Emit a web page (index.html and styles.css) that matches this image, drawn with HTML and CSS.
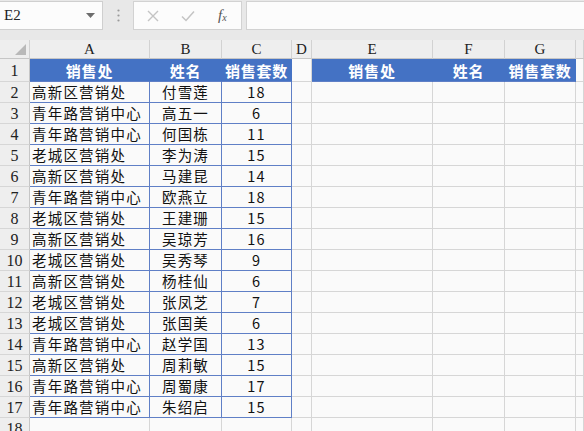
FILE: index.html
```html
<!DOCTYPE html>
<html lang="zh-CN">
<head>
<meta charset="utf-8">
<title>销售表</title>
<link rel="stylesheet" href="styles.css">
</head>
<body>
<div class="toolbar">
  <div class="namebox">
    <span class="namebox-text">E2</span>
    <svg class="dropdown" width="9" height="5" viewBox="0 0 9 5"><path d="M0 0 H9 L4.5 5 Z" fill="#6d6d6d"/></svg>
  </div>
  <div class="grip">
    <svg width="3" height="13" viewBox="0 0 3 13"><circle cx="1.5" cy="1.5" r="1.1" fill="#9a9a9a"/><circle cx="1.5" cy="6.5" r="1.1" fill="#9a9a9a"/><circle cx="1.5" cy="11.5" r="1.1" fill="#9a9a9a"/></svg>
  </div>
  <div class="fxbox">
    <svg class="ico" width="12" height="12" viewBox="0 0 12 12"><path d="M1 1 L11 11 M11 1 L1 11" stroke="#c4c4c4" stroke-width="1.4" fill="none"/></svg>
    <svg class="ico" width="14" height="12" viewBox="0 0 14 12"><path d="M1 6.5 L5 10.5 L13 1.5" stroke="#c4c4c4" stroke-width="1.5" fill="none"/></svg>
    <span class="fx">f<sub>x</sub></span>
  </div>
  <div class="formula"></div>
</div>

<div class="sheet">
  <div class="hd corner"><svg width="11" height="11" viewBox="0 0 11 11"><path d="M11 0 V11 H0 Z" fill="#b9b9b9"/></svg></div>
  <div class="hd">A</div><div class="hd">B</div><div class="hd">C</div><div class="hd">D</div><div class="hd">E</div><div class="hd">F</div><div class="hd">G</div><div class="hd"></div>

  <div class="rh r1">1</div>
  <div class="c th">销售处</div><div class="c th">姓名</div><div class="c th">销售套数</div><div class="c"></div>
  <div class="c th">销售处</div><div class="c th">姓名</div><div class="c th">销售套数</div><div class="c"></div>

  <div class="rh">2</div><div class="c t l">高新区营销处</div><div class="c t">付雪莲</div><div class="c t">18</div><div class="c"></div><div class="c"></div><div class="c"></div><div class="c"></div><div class="c"></div>
  <div class="rh">3</div><div class="c t l">青年路营销中心</div><div class="c t">高五一</div><div class="c t">6</div><div class="c"></div><div class="c"></div><div class="c"></div><div class="c"></div><div class="c"></div>
  <div class="rh">4</div><div class="c t l">青年路营销中心</div><div class="c t">何国栋</div><div class="c t">11</div><div class="c"></div><div class="c"></div><div class="c"></div><div class="c"></div><div class="c"></div>
  <div class="rh">5</div><div class="c t l">老城区营销处</div><div class="c t">李为涛</div><div class="c t">15</div><div class="c"></div><div class="c"></div><div class="c"></div><div class="c"></div><div class="c"></div>
  <div class="rh">6</div><div class="c t l">高新区营销处</div><div class="c t">马建昆</div><div class="c t">14</div><div class="c"></div><div class="c"></div><div class="c"></div><div class="c"></div><div class="c"></div>
  <div class="rh">7</div><div class="c t l">青年路营销中心</div><div class="c t">欧燕立</div><div class="c t">18</div><div class="c"></div><div class="c"></div><div class="c"></div><div class="c"></div><div class="c"></div>
  <div class="rh">8</div><div class="c t l">老城区营销处</div><div class="c t">王建珊</div><div class="c t">15</div><div class="c"></div><div class="c"></div><div class="c"></div><div class="c"></div><div class="c"></div>
  <div class="rh">9</div><div class="c t l">高新区营销处</div><div class="c t">吴琼芳</div><div class="c t">16</div><div class="c"></div><div class="c"></div><div class="c"></div><div class="c"></div><div class="c"></div>
  <div class="rh">10</div><div class="c t l">老城区营销处</div><div class="c t">吴秀琴</div><div class="c t">9</div><div class="c"></div><div class="c"></div><div class="c"></div><div class="c"></div><div class="c"></div>
  <div class="rh">11</div><div class="c t l">高新区营销处</div><div class="c t">杨桂仙</div><div class="c t">6</div><div class="c"></div><div class="c"></div><div class="c"></div><div class="c"></div><div class="c"></div>
  <div class="rh">12</div><div class="c t l">老城区营销处</div><div class="c t">张凤芝</div><div class="c t">7</div><div class="c"></div><div class="c"></div><div class="c"></div><div class="c"></div><div class="c"></div>
  <div class="rh">13</div><div class="c t l">老城区营销处</div><div class="c t">张国美</div><div class="c t">6</div><div class="c"></div><div class="c"></div><div class="c"></div><div class="c"></div><div class="c"></div>
  <div class="rh">14</div><div class="c t l">青年路营销中心</div><div class="c t">赵学国</div><div class="c t">13</div><div class="c"></div><div class="c"></div><div class="c"></div><div class="c"></div><div class="c"></div>
  <div class="rh">15</div><div class="c t l">高新区营销处</div><div class="c t">周莉敏</div><div class="c t">15</div><div class="c"></div><div class="c"></div><div class="c"></div><div class="c"></div><div class="c"></div>
  <div class="rh">16</div><div class="c t l">青年路营销中心</div><div class="c t">周蜀康</div><div class="c t">17</div><div class="c"></div><div class="c"></div><div class="c"></div><div class="c"></div><div class="c"></div>
  <div class="rh">17</div><div class="c t l">青年路营销中心</div><div class="c t">朱绍启</div><div class="c t">15</div><div class="c"></div><div class="c"></div><div class="c"></div><div class="c"></div><div class="c"></div>
  <div class="rh">18</div><div class="c"></div><div class="c"></div><div class="c"></div><div class="c"></div><div class="c"></div><div class="c"></div><div class="c"></div><div class="c"></div>
</div>
</body>
</html>
```

FILE: styles.css
```css
* { box-sizing: border-box; }
html, body { margin: 0; padding: 0; }
body {
  width: 584px;
  height: 431px;
  overflow: hidden;
  background: #e8e8e8;
  font-family: "Noto Sans CJK SC", "Noto Sans", sans-serif;
}

.toolbar {
  display: flex;
  align-items: stretch;
  height: 40px;
  padding: 1px 0 10px 0;
  background: #e8e8e8;
}
.namebox {
  width: 103px;
  background: #fcfcfc;
  border: 1px solid #cfcfcf;
  border-left: none;
  display: flex;
  align-items: center;
  justify-content: space-between;
  padding: 0 7px 0 4px;
}
.namebox-text {
  font-family: "Liberation Serif", serif;
  font-size: 15px;
  color: #222;
}
.grip {
  width: 30px;
  display: flex;
  align-items: center;
  justify-content: center;
}
.fxbox {
  width: 109px;
  background: #fcfcfc;
  border: 1px solid #d2d2d2;
  display: flex;
  align-items: center;
  padding: 0 0 0 13px;
}
.fxbox .ico:first-child { margin-right: 22px; }
.fxbox .ico:nth-child(2) { margin-right: 23px; }
.fx {
  font-family: "Liberation Serif", serif;
  font-style: italic;
  font-size: 15px;
  color: #555;
  line-height: 1;
}
.fx sub { font-size: 10px; vertical-align: -1px; }
.formula {
  flex: 1;
  margin-left: 4px;
  background: #fcfcfc;
  border: 1px solid #d2d2d2;
  border-right: none;
}

.sheet {
  display: grid;
  grid-template-columns: 30px 120px 72px 70px 20px 121px 72px 71px 1fr;
  grid-template-rows: 19px 23px repeat(17, 21px);
  background: #fafafa;
}
.hd {
  background: #eeeeee;
  border-right: 1px solid #d2d2d2;
  border-bottom: 1px solid #c6c6c6;
  font-family: "Liberation Serif", serif;
  font-size: 15px;
  color: #222;
  display: flex;
  align-items: center;
  justify-content: center;
  line-height: 1;
  padding-top: 1px;
}
.corner {
  justify-content: flex-end;
  align-items: flex-end;
  padding: 0 3px 3px 0;
}
.rh {
  background: #eeeeee;
  border-right: 1px solid #c6c6c6;
  border-bottom: 1px solid #d6d6d6;
  font-family: "Liberation Serif", serif;
  font-size: 16px;
  color: #222;
  display: flex;
  align-items: center;
  justify-content: center;
  padding-top: 2px;
  line-height: 1;
}
.c {
  border-right: 1px solid #d6d6d6;
  border-bottom: 1px solid #d6d6d6;
  font-size: 14.5px;
  letter-spacing: 1.2px;
  color: #111;
  display: flex;
  align-items: center;
  justify-content: center;
  white-space: nowrap;
  overflow: hidden;
  line-height: 1;
  padding-top: 1px;
}
.c.l { justify-content: flex-start; padding-left: 2px; }
.c.t { border-color: #5f7fc6; }
.c.th {
  background: #4472c4;
  border-right-color: #4472c4;
  border-bottom-color: #5f7fc6;
  color: #fff;
  font-weight: bold;
  font-size: 15px;
  letter-spacing: 0.8px;
}
```
